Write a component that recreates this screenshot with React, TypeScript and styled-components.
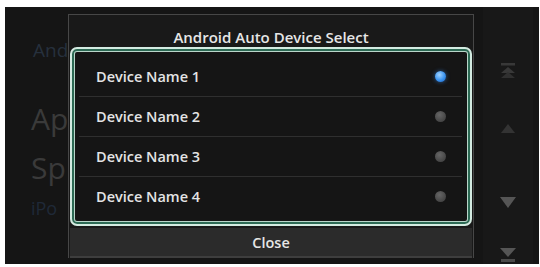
import React from "react";
import styled, { createGlobalStyle } from "styled-components";

const Global = createGlobalStyle`
  html, body { margin: 0; padding: 0; background: #ffffff; }
  body { font-family: "Open Sans", "Liberation Sans", sans-serif; }
`;

const Page = styled.div`
  width: 540px;
  height: 267px;
  padding: 7px 1px 3px 5px;
  box-sizing: border-box;
`;

const Screen = styled.div`
  position: relative;
  width: 534px;
  height: 257px;
  background: #151515;
  display: flex;
  overflow: hidden;
`;

const BackColumn = styled.div`
  width: 63px;
  overflow: hidden;
  display: flex;
  flex-direction: column;
  padding: 34px 0 0 26px;
  box-sizing: border-box;
`;

const Middle = styled.div`
  flex: 1;
`;

const BgText = styled.div<{ $size: number; $color: string; $mt: number; $ml?: number }>`
  font-size: ${(p) => p.$size}px;
  line-height: 1;
  color: ${(p) => p.$color};
  margin-top: ${(p) => p.$mt}px;
  margin-left: ${(p) => p.$ml ?? 0}px;
  font-weight: 400;
  white-space: nowrap;
`;

const ScrollColumn = styled.div`
  width: 50px;
  margin-right: 6px;
  background: #181818;
  display: flex;
  flex-direction: column;
  align-items: center;
  padding-top: 55px;
`;

const ScrollIcon = styled.svg<{ $mt: number }>`
  margin-top: ${(p) => p.$mt}px;
  display: block;
`;

const Dialog = styled.div`
  position: absolute;
  left: 63px;
  top: 7px;
  width: 406px;
  height: 244px;
  box-sizing: border-box;
  background: #191919;
  border: 1px solid #474747;
  border-bottom: none;
  display: flex;
  flex-direction: column;
  padding: 0 1px;
`;

const Title = styled.div`
  height: 32px;
  padding-top: 12px;
  box-sizing: border-box;
  line-height: 20px;
  text-align: center;
  color: #e6e6e6;
  font-size: 15px;
  font-weight: 600;
`;

const ListBox = styled.div`
  box-sizing: border-box;
  height: 181px;
  border: 2px solid #d3ebe1;
  border-radius: 7px;
  box-shadow: inset 0 0 0 2px #2c6a54, inset 0 0 0 3px #b9d6ca;
  background: #151515;
  padding: 8px 8px 0 7px;
  display: flex;
  flex-direction: column;
`;

const Row = styled.div<{ $divider: boolean }>`
  height: 40px;
  display: flex;
  align-items: center;
  justify-content: space-between;
  padding: 0 16px 0 17px;
  border-bottom: ${(p) => (p.$divider ? "1px solid #2f2f2f" : "1px solid transparent")};
  box-sizing: border-box;
`;

const RowLabel = styled.span`
  color: #e4e4e4;
  font-size: 14.5px;
  font-weight: 600;
`;

const Radio = styled.span<{ $on: boolean }>`
  width: 11px;
  height: 11px;
  border-radius: 50%;
  background: ${(p) =>
    p.$on
      ? "radial-gradient(circle at 40% 35%, #9fd2ff 0%, #3a93f0 55%, #1c5fb8 100%)"
      : "radial-gradient(circle at 40% 35%, #666 0%, #4a4a4a 60%, #3a3a3a 100%)"};
  box-shadow: ${(p) => (p.$on ? "0 0 4px rgba(60,140,240,0.6)" : "none")};
`;

const CloseButton = styled.div`
  margin-top: 2px;
  height: 28px;
  background: #2b2b2b;
  border-bottom: 2px solid #3e3e3e;
  display: flex;
  align-items: center;
  justify-content: center;
  color: #e6e6e6;
  font-size: 14.5px;
  font-weight: 600;
`;

const devices = ["Device Name 1", "Device Name 2", "Device Name 3", "Device Name 4"];

export default function App() {
  return (
    <Page>
      <Global />
      <Screen>
        <BackColumn>
          <BgText $size={19} $color="#26303d" $mt={0} $ml={2}>And</BgText>
          <BgText $size={30} $color="#3a3a3a" $mt={44}>Ap</BgText>
          <BgText $size={30} $color="#3a3a3a" $mt={19}>Sp</BgText>
          <BgText $size={18} $color="#1f2938" $mt={16}>iPo</BgText>
        </BackColumn>
        <Middle />
        <ScrollColumn>
          <ScrollIcon $mt={0} width="16" height="16" viewBox="0 0 16 16">
            <rect x="1" y="1" width="14" height="2.5" fill="#383838" />
            <path d="M8 5 L15 11 L1 11 Z" fill="#383838" />
            <path d="M8 10 L15 16 L1 16 Z" fill="#303030" />
          </ScrollIcon>
          <ScrollIcon $mt={46} width="14" height="9" viewBox="0 0 14 9">
            <path d="M7 0 L14 9 L0 9 Z" fill="#333" />
          </ScrollIcon>
          <ScrollIcon $mt={64} width="16" height="11" viewBox="0 0 16 11">
            <path d="M0 0 L16 0 L8 11 Z" fill="#555" />
          </ScrollIcon>
          <ScrollIcon $mt={40} width="16" height="16" viewBox="0 0 16 16">
            <path d="M0 0 L16 0 L8 9 Z" fill="#555" />
            <rect x="1" y="11" width="14" height="3" fill="#4a4a4a" />
          </ScrollIcon>
        </ScrollColumn>
        <Dialog>
          <Title>Android Auto Device Select</Title>
          <ListBox>
            {devices.map((d, i) => (
              <Row key={d} $divider={i < devices.length - 1}>
                <RowLabel>{d}</RowLabel>
                <Radio $on={i === 0} />
              </Row>
            ))}
          </ListBox>
          <CloseButton>Close</CloseButton>
        </Dialog>
      </Screen>
    </Page>
  );
}
